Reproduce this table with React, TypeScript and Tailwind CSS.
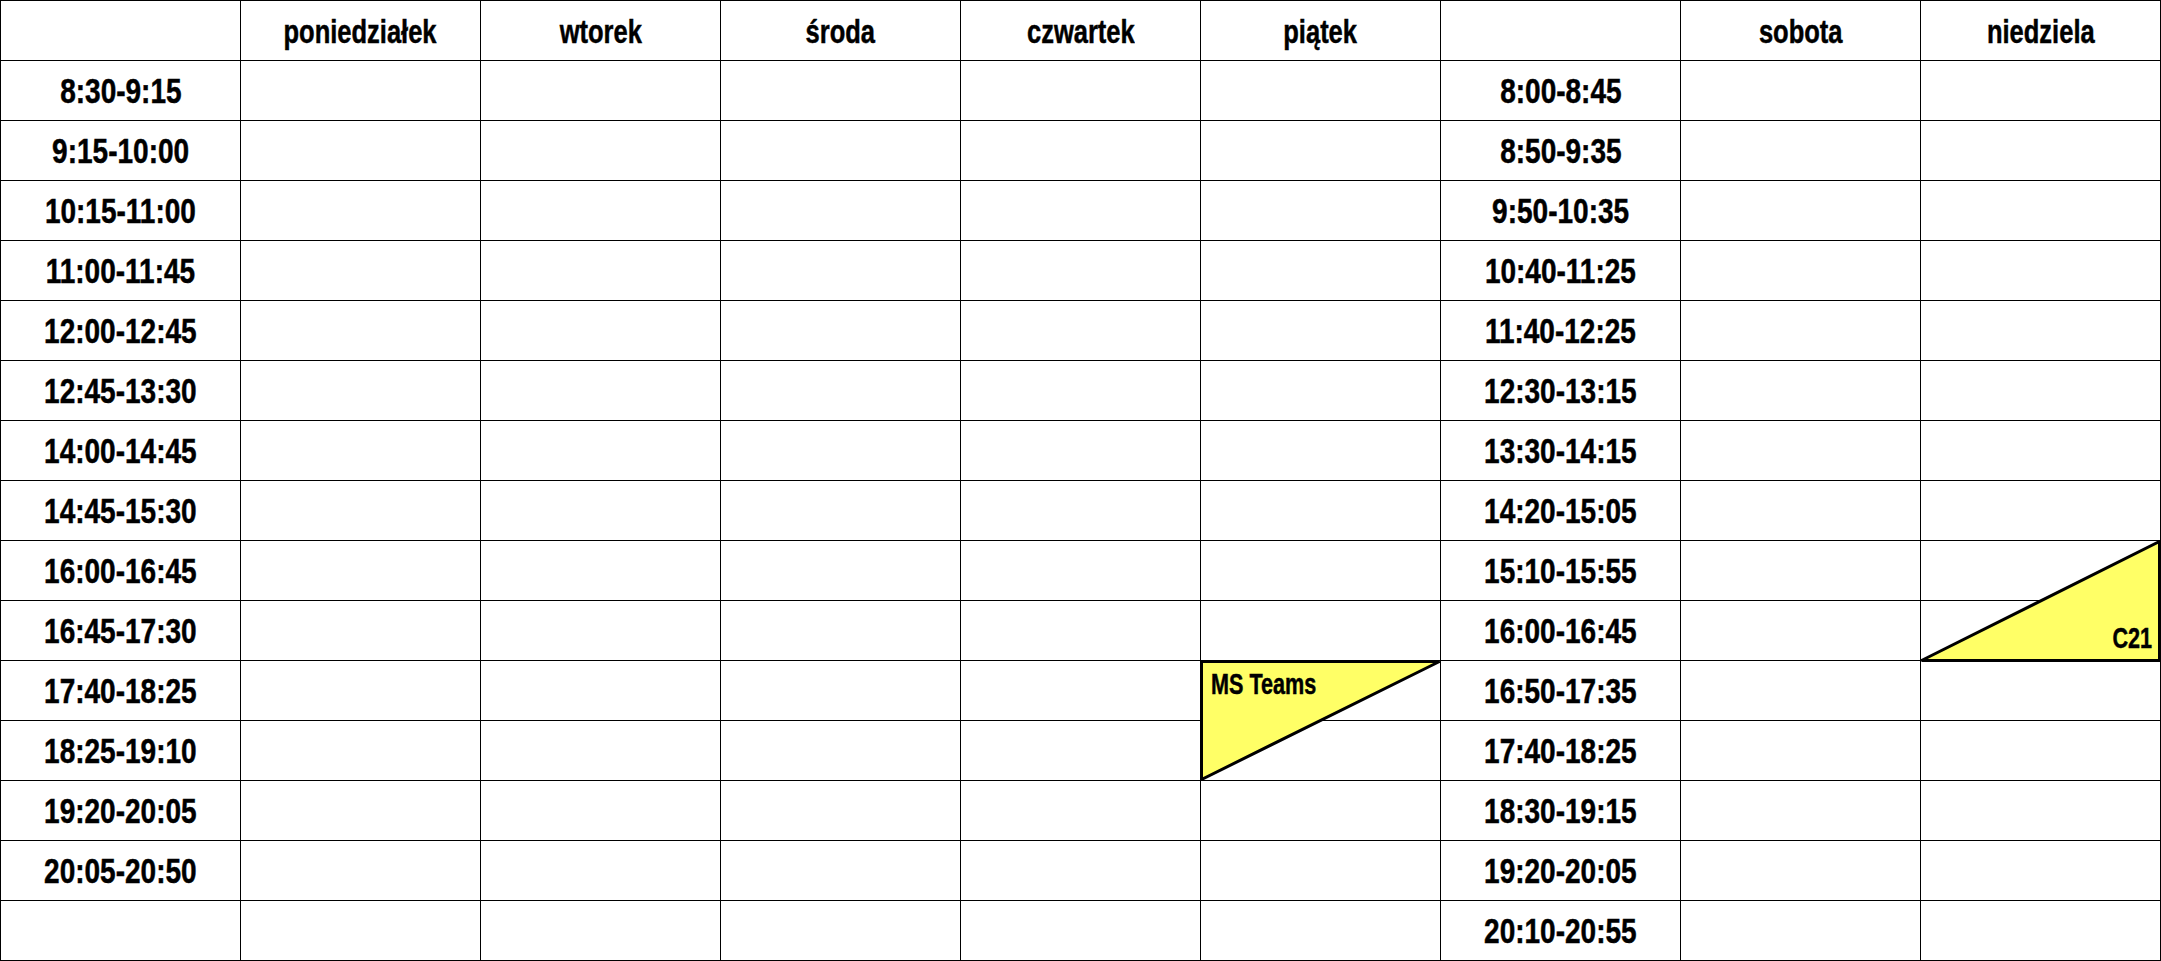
import React from 'react';

const days = ['', 'poniedziałek', 'wtorek', 'środa', 'czwartek', 'piątek', '', 'sobota', 'niedziela'];

const weekTimes = [
  '8:30-9:15', '9:15-10:00', '10:15-11:00', '11:00-11:45', '12:00-12:45',
  '12:45-13:30', '14:00-14:45', '14:45-15:30', '16:00-16:45', '16:45-17:30',
  '17:40-18:25', '18:25-19:10', '19:20-20:05', '20:05-20:50', '',
];

const weekendTimes = [
  '8:00-8:45', '8:50-9:35', '9:50-10:35', '10:40-11:25', '11:40-12:25',
  '12:30-13:15', '13:30-14:15', '14:20-15:05', '15:10-15:55', '16:00-16:45',
  '16:50-17:35', '17:40-18:25', '18:30-19:15', '19:20-20:05', '20:10-20:55',
];

const font = { fontFamily: '"Liberation Sans", Arial, sans-serif' };

// the sheet uses a tall condensed face; squeeze Liberation Sans to match
function Cell({ children, time }: { children?: React.ReactNode; time?: boolean }) {
  return (
    <div className="h-[60px] border-r border-b border-black flex items-center justify-center text-black">
      {children && (
        <span
          className={
            time
              ? 'inline-block whitespace-nowrap text-[35px] font-bold leading-none scale-x-[0.8] [-webkit-text-stroke:0.5px_#000]'
              : 'inline-block whitespace-nowrap text-[34px] font-bold leading-none scale-x-[0.75] [-webkit-text-stroke:0.5px_#000]'
          }
        >
          {children}
        </span>
      )}
    </div>
  );
}

function App() {
  return (
    <div className="min-h-screen bg-white" style={font}>
      <div className="relative w-[2161px] border-l border-t border-black">
        <div className="grid grid-cols-[repeat(9,240px)]">
          {days.map((d, i) => (
            <Cell key={'h' + i}>{d}</Cell>
          ))}
          {weekTimes.map((t, r) => (
            <React.Fragment key={'r' + r}>
              <Cell time>{t}</Cell>
              <Cell />
              <Cell />
              <Cell />
              <Cell />
              <Cell />
              <Cell time>{weekendTimes[r]}</Cell>
              <Cell />
              <Cell />
            </React.Fragment>
          ))}
        </div>

        {/* MS Teams slot, friday */}
        <div className="absolute left-[1199px] top-[659px] w-[241px] h-[121px]">
          <svg width="241" height="121" className="absolute inset-0">
            <polygon points="1.5,1.5 239.5,1.5 1.5,119.5" fill="#ffff66" stroke="#000" strokeWidth="3" strokeLinejoin="miter" />
          </svg>
          <span className="absolute left-[11px] top-[9px] whitespace-nowrap text-[30px] font-bold leading-none text-black origin-left scale-x-[0.72] [-webkit-text-stroke:0.5px_#000]">
            MS Teams
          </span>
        </div>

        {/* C21 slot, sunday */}
        <div className="absolute left-[1919px] top-[539px] w-[241px] h-[122px]">
          <svg width="241" height="122" className="absolute inset-0">
            <polygon points="1.5,120.5 239.5,1.5 239.5,120.5" fill="#ffff66" stroke="#000" strokeWidth="3" strokeLinejoin="miter" />
          </svg>
          <span className="absolute right-[9px] top-[83px] whitespace-nowrap text-[30px] font-bold leading-none text-black origin-right scale-x-[0.72] [-webkit-text-stroke:0.5px_#000]">
            C21
          </span>
        </div>
      </div>
    </div>
  );
}

export default App;
